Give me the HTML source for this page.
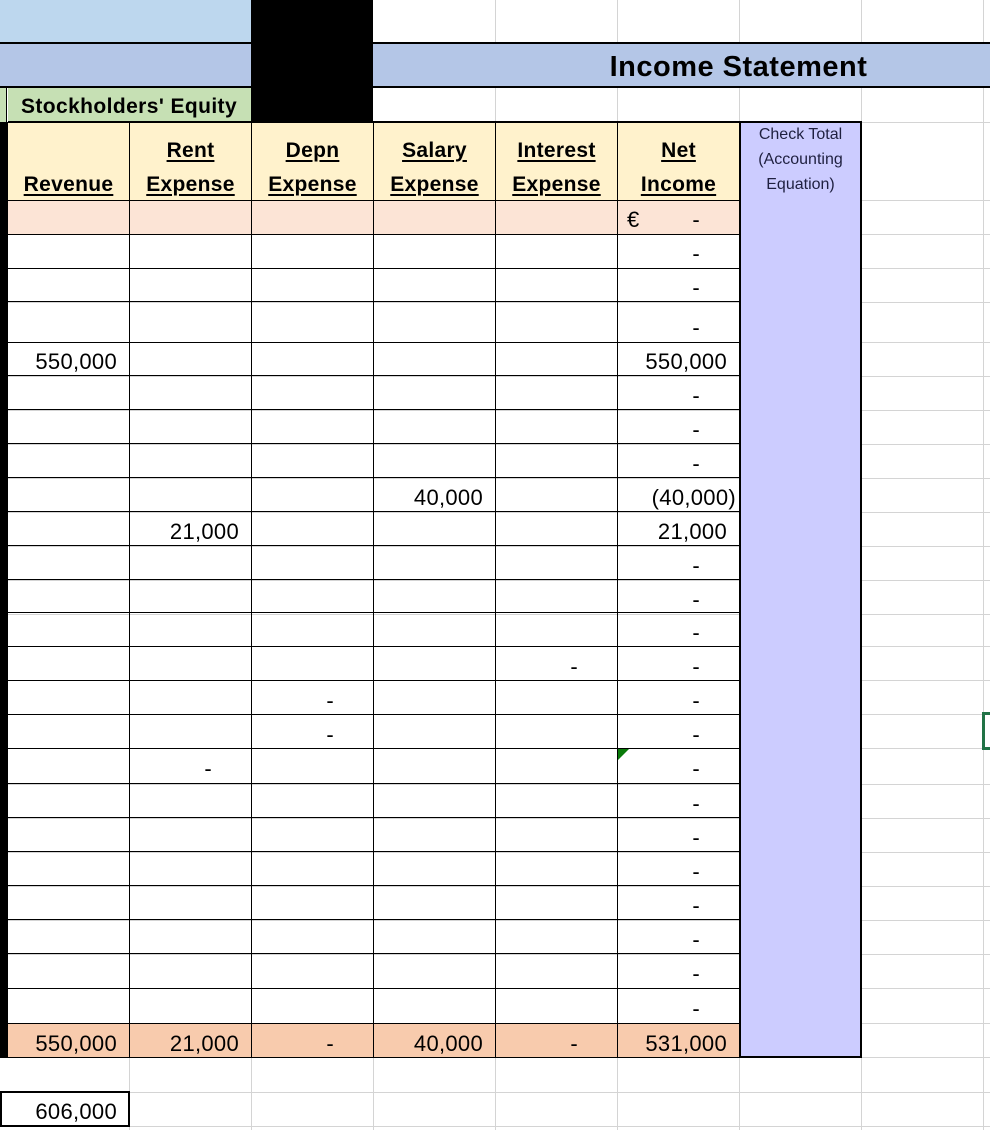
<!DOCTYPE html>
<html><head><meta charset="utf-8"><style>
*{margin:0;padding:0;box-sizing:border-box}
body{width:990px;height:1130px;position:relative;overflow:hidden;background:#fff;font-family:"Liberation Sans",sans-serif;color:#000}
.a{position:absolute}
.h{position:absolute;height:1px;background:#d4d4d4}
.v{position:absolute;width:1px;background:#d4d4d4}
.bh{position:absolute;height:1px;background:#000}
.bv{position:absolute;width:1px;background:#000}
.t{position:absolute;display:flex;align-items:flex-end;justify-content:flex-end;font-size:22px;letter-spacing:0.3px;padding-bottom:2px;line-height:25px}
.hd{position:absolute;top:124px;height:76px;font-weight:bold;font-size:21px;letter-spacing:0.3px;text-decoration:underline;text-decoration-thickness:2px;text-underline-offset:3px;text-align:center;line-height:34px;padding-top:10px}
</style></head><body>
<div class="v" style="left:495px;top:0;height:1130px"></div>
<div class="v" style="left:617px;top:0;height:1130px"></div>
<div class="v" style="left:739px;top:0;height:1130px"></div>
<div class="v" style="left:861px;top:0;height:1130px"></div>
<div class="v" style="left:983px;top:0;height:1130px"></div>
<div class="v" style="left:129px;top:1057px;height:73px"></div>
<div class="v" style="left:251px;top:1057px;height:73px"></div>
<div class="v" style="left:373px;top:1057px;height:73px"></div>
<div class="h" style="left:0;top:122px;width:990px"></div>
<div class="h" style="left:0;top:200px;width:990px"></div>
<div class="h" style="left:0;top:234px;width:990px"></div>
<div class="h" style="left:0;top:268px;width:990px"></div>
<div class="h" style="left:0;top:302px;width:990px"></div>
<div class="h" style="left:0;top:342px;width:990px"></div>
<div class="h" style="left:0;top:376px;width:990px"></div>
<div class="h" style="left:0;top:410px;width:990px"></div>
<div class="h" style="left:0;top:444px;width:990px"></div>
<div class="h" style="left:0;top:478px;width:990px"></div>
<div class="h" style="left:0;top:512px;width:990px"></div>
<div class="h" style="left:0;top:546px;width:990px"></div>
<div class="h" style="left:0;top:580px;width:990px"></div>
<div class="h" style="left:0;top:614px;width:990px"></div>
<div class="h" style="left:0;top:646px;width:990px"></div>
<div class="h" style="left:0;top:680px;width:990px"></div>
<div class="h" style="left:0;top:714px;width:990px"></div>
<div class="h" style="left:0;top:748px;width:990px"></div>
<div class="h" style="left:0;top:784px;width:990px"></div>
<div class="h" style="left:0;top:818px;width:990px"></div>
<div class="h" style="left:0;top:852px;width:990px"></div>
<div class="h" style="left:0;top:886px;width:990px"></div>
<div class="h" style="left:0;top:920px;width:990px"></div>
<div class="h" style="left:0;top:954px;width:990px"></div>
<div class="h" style="left:0;top:988px;width:990px"></div>
<div class="h" style="left:0;top:1023px;width:990px"></div>
<div class="h" style="left:0;top:1057px;width:990px"></div>
<div class="h" style="left:0;top:1092px;width:990px"></div>
<div class="h" style="left:0;top:1126px;width:990px"></div>

<div class="a" style="left:0;top:0;width:251px;height:42px;background:#bdd7ee"></div>
<div class="a" style="left:0;top:42px;width:990px;height:46px;background:#b4c6e7;border-top:2px solid #000;border-bottom:2px solid #000"></div>
<div class="a" style="left:251px;top:0;width:122px;height:122px;background:#000"></div>
<div class="a" style="left:373px;top:44px;width:617px;height:42px;font-weight:bold;font-size:29px;letter-spacing:0.5px;text-align:center;line-height:46px;padding-left:114px">Income Statement</div>
<div class="a" style="left:0;top:88px;width:7px;height:34px;background:#c6e0b4;border-right:1px solid #000"></div>
<div class="a" style="left:8px;top:88px;width:243px;height:34px;background:#c6e0b4;font-weight:bold;font-size:21px;letter-spacing:0.4px;line-height:38px;padding-left:13px">Stockholders' Equity</div>

<div class="a" style="left:0;top:122px;width:8px;height:936px;background:#000"></div>
<div class="a" style="left:8px;top:122px;width:731px;height:78px;background:#fff2cc"></div>
<div class="a" style="left:8px;top:200px;width:731px;height:34px;background:#fce4d6"></div>
<div class="a" style="left:8px;top:1023px;width:731px;height:34px;background:#f8cbad"></div>
<div class="a" style="left:739px;top:121px;width:123px;height:937px;background:#ccccff;border:2px solid #000"></div>
<div class="a" style="left:741px;top:122px;width:119px;font-size:16px;color:#1f2040;text-align:center;line-height:25px">Check Total<br>(Accounting<br>Equation)</div>

<div class="bh" style="left:8px;top:121px;width:731px;height:2px"></div>
<div class="bh" style="left:8px;top:200px;width:731px"></div>
<div class="bh" style="left:8px;top:234px;width:731px"></div>
<div class="bh" style="left:8px;top:268px;width:731px"></div>
<div class="bh" style="left:8px;top:301px;width:731px"></div>
<div class="bh" style="left:8px;top:342px;width:731px"></div>
<div class="bh" style="left:8px;top:375px;width:731px"></div>
<div class="bh" style="left:8px;top:409px;width:731px"></div>
<div class="bh" style="left:8px;top:443px;width:731px"></div>
<div class="bh" style="left:8px;top:477px;width:731px"></div>
<div class="bh" style="left:8px;top:511px;width:731px"></div>
<div class="bh" style="left:8px;top:545px;width:731px"></div>
<div class="bh" style="left:8px;top:579px;width:731px"></div>
<div class="bh" style="left:8px;top:612px;width:731px"></div>
<div class="bh" style="left:8px;top:646px;width:731px"></div>
<div class="bh" style="left:8px;top:680px;width:731px"></div>
<div class="bh" style="left:8px;top:714px;width:731px"></div>
<div class="bh" style="left:8px;top:748px;width:731px"></div>
<div class="bh" style="left:8px;top:783px;width:731px"></div>
<div class="bh" style="left:8px;top:817px;width:731px"></div>
<div class="bh" style="left:8px;top:851px;width:731px"></div>
<div class="bh" style="left:8px;top:885px;width:731px"></div>
<div class="bh" style="left:8px;top:919px;width:731px"></div>
<div class="bh" style="left:8px;top:953px;width:731px"></div>
<div class="bh" style="left:8px;top:988px;width:731px"></div>
<div class="bh" style="left:8px;top:1023px;width:731px"></div>
<div class="bh" style="left:8px;top:1057px;width:731px"></div>
<div class="bv" style="left:129px;top:122px;height:936px"></div>
<div class="bv" style="left:251px;top:122px;height:936px"></div>
<div class="bv" style="left:373px;top:122px;height:936px"></div>
<div class="bv" style="left:495px;top:122px;height:936px"></div>
<div class="bv" style="left:617px;top:122px;height:936px"></div>

<div class="hd" style="left:8px;width:121px"><br>Revenue</div>
<div class="hd" style="left:130px;width:121px">Rent<br>Expense</div>
<div class="hd" style="left:252px;width:121px">Depn<br>Expense</div>
<div class="hd" style="left:374px;width:121px">Salary<br>Expense</div>
<div class="hd" style="left:496px;width:121px">Interest<br>Expense</div>
<div class="hd" style="left:618px;width:121px">Net<br>Income</div>

<div class="t" style="left:618px;top:200px;width:121px;height:34px;justify-content:space-between;padding-left:9px;padding-right:39px"><span>€</span><span>-</span></div>
<div class="t" style="left:618px;top:234px;width:121px;height:34px;padding-right:39px">-</div>
<div class="t" style="left:618px;top:268px;width:121px;height:34px;padding-right:39px">-</div>
<div class="t" style="left:618px;top:302px;width:121px;height:40px;padding-right:39px">-</div>
<div class="t" style="left:8px;top:342px;width:121px;height:34px;padding-right:12px">550,000</div>
<div class="t" style="left:618px;top:342px;width:121px;height:34px;padding-right:12px">550,000</div>
<div class="t" style="left:618px;top:376px;width:121px;height:34px;padding-right:39px">-</div>
<div class="t" style="left:618px;top:410px;width:121px;height:34px;padding-right:39px">-</div>
<div class="t" style="left:618px;top:444px;width:121px;height:34px;padding-right:39px">-</div>
<div class="t" style="left:374px;top:478px;width:121px;height:34px;padding-right:12px">40,000</div>
<div class="t" style="left:618px;top:478px;width:121px;height:34px;padding-right:3px">(40,000)</div>
<div class="t" style="left:130px;top:512px;width:121px;height:34px;padding-right:12px">21,000</div>
<div class="t" style="left:618px;top:512px;width:121px;height:34px;padding-right:12px">21,000</div>
<div class="t" style="left:618px;top:546px;width:121px;height:34px;padding-right:39px">-</div>
<div class="t" style="left:618px;top:580px;width:121px;height:34px;padding-right:39px">-</div>
<div class="t" style="left:618px;top:613px;width:121px;height:34px;padding-right:39px">-</div>
<div class="t" style="left:496px;top:647px;width:121px;height:34px;padding-right:39px">-</div>
<div class="t" style="left:618px;top:647px;width:121px;height:34px;padding-right:39px">-</div>
<div class="t" style="left:252px;top:681px;width:121px;height:34px;padding-right:39px">-</div>
<div class="t" style="left:618px;top:681px;width:121px;height:34px;padding-right:39px">-</div>
<div class="t" style="left:252px;top:715px;width:121px;height:34px;padding-right:39px">-</div>
<div class="t" style="left:618px;top:715px;width:121px;height:34px;padding-right:39px">-</div>
<div class="t" style="left:130px;top:749px;width:121px;height:34px;padding-right:39px">-</div>
<div class="t" style="left:618px;top:749px;width:121px;height:34px;padding-right:39px">-</div>
<div class="t" style="left:618px;top:784px;width:121px;height:34px;padding-right:39px">-</div>
<div class="t" style="left:618px;top:818px;width:121px;height:34px;padding-right:39px">-</div>
<div class="t" style="left:618px;top:852px;width:121px;height:34px;padding-right:39px">-</div>
<div class="t" style="left:618px;top:886px;width:121px;height:34px;padding-right:39px">-</div>
<div class="t" style="left:618px;top:920px;width:121px;height:34px;padding-right:39px">-</div>
<div class="t" style="left:618px;top:954px;width:121px;height:34px;padding-right:39px">-</div>
<div class="t" style="left:618px;top:989px;width:121px;height:34px;padding-right:39px">-</div>
<div class="t" style="left:8px;top:1024px;width:121px;height:34px;padding-right:12px">550,000</div>
<div class="t" style="left:130px;top:1024px;width:121px;height:34px;padding-right:12px">21,000</div>
<div class="t" style="left:252px;top:1024px;width:121px;height:34px;padding-right:39px">-</div>
<div class="t" style="left:374px;top:1024px;width:121px;height:34px;padding-right:12px">40,000</div>
<div class="t" style="left:496px;top:1024px;width:121px;height:34px;padding-right:39px">-</div>
<div class="t" style="left:618px;top:1024px;width:121px;height:34px;padding-right:12px">531,000</div>

<div class="a" style="left:618px;top:749px;width:0;height:0;border-top:11px solid #0a7a0a;border-right:11px solid transparent"></div>
<div class="a" style="left:982px;top:712px;width:12px;height:38px;border:3px solid #217346"></div>

<div class="a" style="left:0;top:1091px;width:130px;height:36px;border:2px solid #000;background:#fff"></div>
<div class="t" style="left:0;top:1092px;width:129px;height:34px;padding-right:12px">606,000</div>
</body></html>
